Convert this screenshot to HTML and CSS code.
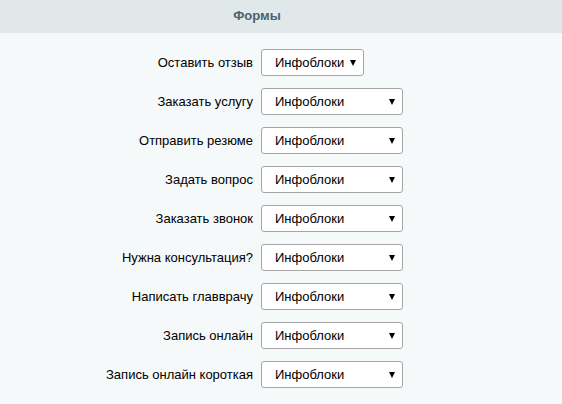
FILE: index.html
```html
<!DOCTYPE html>
<html lang="ru">

<head>
    <meta charset="UTF-8">
    <title>Формы</title>
    <link rel="stylesheet" href="styles.css">
</head>

<body>
    <div class="header">Формы</div>
    <div class="forms">
        <label>Оставить отзыв</label>
        <span class="select short"><select><option>Инфоблоки</option></select></span>
        <label>Заказать услугу</label>
        <span class="select"><select><option>Инфоблоки</option></select></span>
        <label>Отправить резюме</label>
        <span class="select"><select><option>Инфоблоки</option></select></span>
        <label>Задать вопрос</label>
        <span class="select"><select><option>Инфоблоки</option></select></span>
        <label>Заказать звонок</label>
        <span class="select"><select><option>Инфоблоки</option></select></span>
        <label>Нужна консультация?</label>
        <span class="select"><select><option>Инфоблоки</option></select></span>
        <label>Написать главврачу</label>
        <span class="select"><select><option>Инфоблоки</option></select></span>
        <label>Запись онлайн</label>
        <span class="select"><select><option>Инфоблоки</option></select></span>
        <label>Запись онлайн короткая</label>
        <span class="select"><select><option>Инфоблоки</option></select></span>
    </div>
</body>

</html>
```

FILE: styles.css
```css
body {
    margin: 0;
    background: #f5f9f9;
    font-family: "Liberation Sans", Arial, sans-serif;
    font-size: 13px;
    color: #000;
}

.header {
    height: 33px;
    line-height: 32px;
    background: #e0e8ea;
    color: #4b6272;
    font-weight: bold;
    text-align: center;
    padding-right: 48px;
}

.forms {
    display: grid;
    grid-template-columns: 253px auto;
    column-gap: 8px;
    row-gap: 12px;
    align-items: center;
    justify-items: start;
    padding-top: 16px;
}

.forms label {
    justify-self: end;
}

.select {
    position: relative;
    display: block;
}

.select select {
    appearance: none;
    -webkit-appearance: none;
    width: 142px;
    height: 27px;
    margin: 0;
    padding: 0 20px 0 13px;
    border: 1px solid #a6a6a6;
    border-radius: 3px;
    background: #fff;
    font-family: inherit;
    font-size: 13px;
    color: #000;
}

.select.short select {
    width: 103px;
    padding-right: 2px;
}

.select::after {
    content: "";
    position: absolute;
    right: 8px;
    top: 11px;
    border-left: 3.5px solid transparent;
    border-right: 3.5px solid transparent;
    border-top: 6px solid #000;
    pointer-events: none;
}
```
